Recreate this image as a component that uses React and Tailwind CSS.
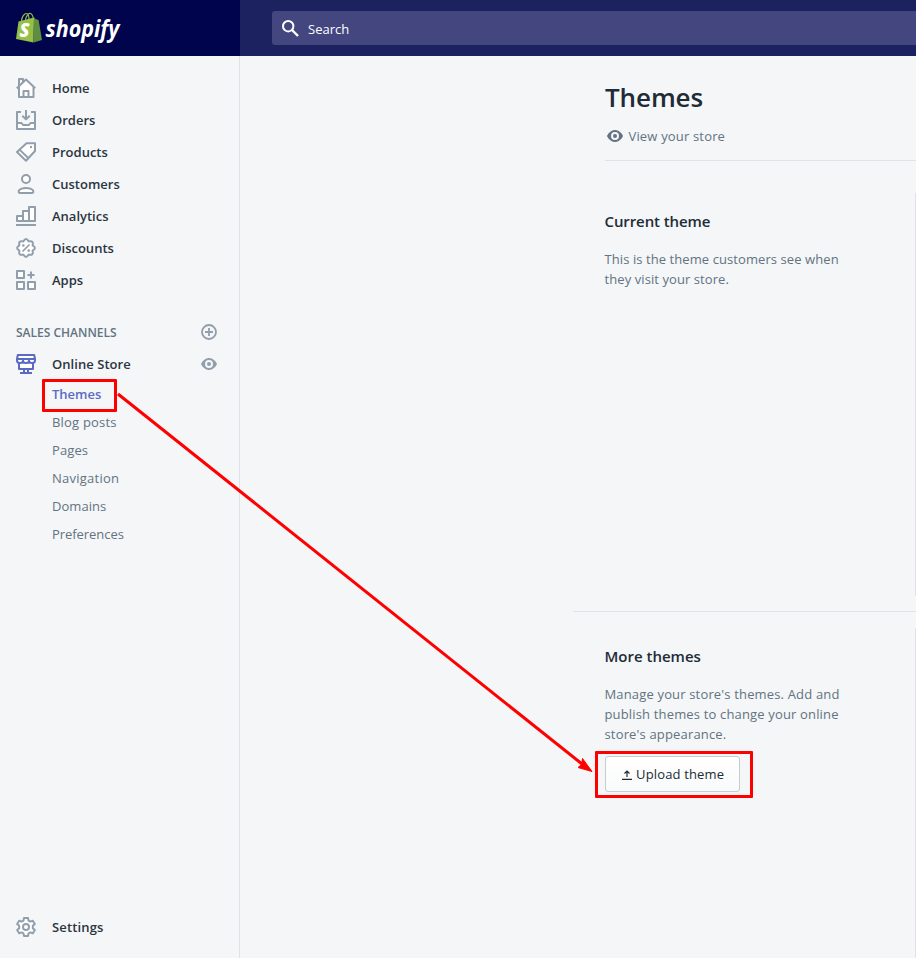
import React from 'react';

const Icon = ({ children, className = 'text-[#919eab]', size = 20 }) => (
  <svg
    width={size}
    height={size}
    viewBox="0 0 20 20"
    fill="none"
    stroke="currentColor"
    strokeWidth="2"
    strokeLinejoin="round"
    className={`block shrink-0 ${className}`}
  >
    {children}
  </svg>
);

const HomeIcon = () => (
  <Icon>
    <path fill="#fff" stroke="none" d="M3 9l7-7 7 7v10H3z" />
    <path d="M.8 10.2L10 1.6l9.2 8.600M3 9v10h14.500V9M7.500 19v-6h5v6M3 8V1h4v3" />
  </Icon>
);
const OrdersIcon = () => (
  <Icon>
    <path fill="#fff" stroke="none" d="M1 13h5l2 2h4l2-2h5v6H1z" />
    <path d="M5 2H1v17h18V2h-4M1 13h4.500l1.500 2h6l1.500-2H19M10 0v9M6.300 5.800L10 9.400l3.700-3.600" />
  </Icon>
);
const ProductsIcon = () => (
  <Icon>
    <path fill="#fff" d="M10.500 1.200H19V9L10 18.800 1 10z" />
    <path d="M3.500 7.600l9 8.600" />
    <rect x="14" y="4" width="2" height="2" fill="currentColor" stroke="none" />
  </Icon>
);
const CustomersIcon = () => (
  <Icon>
    <circle cx="10" cy="5" r="4" fill="#fff" />
    <path fill="#fff" d="M3.800 19h12.400c1.200 0 1.500-1.700.6-2.800C15.600 14.800 13 14 10 14s-5.600.800-6.800 2.200c-.900 1.100-.6 2.800.6 2.800z" />
  </Icon>
);
const AnalyticsIcon = () => (
  <Icon>
    <path fill="#fff" d="M1 15v-5h6v5zM7 15V5h6v10zM13 15V1h6v14z" />
    <path d="M0 19h20" />
  </Icon>
);
const DiscountsIcon = () => (
  <Icon>
    <path
      fill="#fff"
      d="M7.300 3.400Q10-1.200 12.700 3.400Q17.800 2.200 16.600 7.300Q21.200 10 16.600 12.700Q17.800 17.800 12.700 16.600Q10 21.200 7.300 16.600Q2.200 17.800 3.400 12.700Q-1.200 10 3.400 7.300Q2.200 2.200 7.300 3.400z"
    />
    <path strokeWidth="1.700" d="M6.500 13.500l7-7" />
    <circle cx="7.300" cy="7.500" r="1.300" fill="currentColor" stroke="none" />
    <circle cx="12.700" cy="12.600" r="1.300" fill="currentColor" stroke="none" />
  </Icon>
);
const AppsIcon = () => (
  <Icon>
    <path fill="#fff" d="M1 1h7v7H1zM1 12h7v7H1zM12 12h7v7h-7z" />
    <path d="M15 1.500v7M11.500 5h7" />
  </Icon>
);
const StoreIcon = () => (
  <Icon className="text-[#5c6ac4]">
    <path fill="#fff" d="M3 8h14v7H3z" />
    <path fill="#fff" stroke="none" d="M2 1h16l1 4v2l-3 2-3-2-3 2-3-2-3 2-3-2V5z" />
    <path d="M1 5l.800-4h16.400L19 5zM1 5v1.500C1 8 2.300 9 4 9s3-1 3-2.500C7 8 8.300 9 10 9s3-1 3-2.500C13 8 14.300 9 16 9s3-1 3-2.500V5" />
    <path d="M8 15v3.500M12 15v3.500M4 19h12" />
  </Icon>
);
const SettingsIcon = () => (
  <Icon>
    <path
      fill="#fff"
      d="M8 1h4l.500 2.600 1.800 1 2.500-.900 2 3.400-2 1.700v2.400l2 1.700-2 3.400-2.500-.900-1.800 1L12 19H8l-.500-2.600-1.800-1-2.500.900-2-3.400 2-1.700V8.800l-2-1.700 2-3.400 2.500.900 1.800-1z"
    />
    <circle cx="10" cy="10" r="3" />
  </Icon>
);
const EyeIcon = ({ className }) => (
  <svg width="16" height="12" viewBox="0 0 16 12" className={`block shrink-0 ${className}`}>
    <path fill="currentColor" d="M8 0C2.500 0 0 6 0 6s2.500 6 8 6 8-6 8-6-2.500-6-8-6z" />
    <circle cx="8" cy="6" r="3" fill="currentColor" stroke="#f4f6f8" strokeWidth="2" />
  </svg>
);

const NAV = [
  ['Home', HomeIcon],
  ['Orders', OrdersIcon],
  ['Products', ProductsIcon],
  ['Customers', CustomersIcon],
  ['Analytics', AnalyticsIcon],
  ['Discounts', DiscountsIcon],
  ['Apps', AppsIcon],
];
const PAGES = [
  ['Blog posts', 'tracking-[0.2px]'],
  ['Pages', 'tracking-[0.1px]'],
  ['Navigation', 'tracking-[0.25px]'],
  ['Domains', 'tracking-[0.05px]'],
  ['Preferences', 'tracking-[-0.05px]'],
];

const Logo = () => (
  <svg width="108" height="36" viewBox="0 0 108 36" className="block overflow-visible">
    <path d="M5.500 9C6 4 8.500 1.500 10.500 1.500S13 4 13 8M9.500 8C10 4 12.500 1 14.500 1.500S17 5 17.500 7" fill="none" stroke="#95bf47" strokeWidth="1.200" />
    <path fill="#95bf47" d="M2.500 9.500L18 5.500l-.5 25L0 27z" />
    <path fill="#5e8e3e" d="M18 5.500l2 1.800 2.600.600L26 28l-8.500 2.500z" />
    <text x="3.500" y="24.500" fill="#fff" fontFamily="Open Sans, sans-serif" fontWeight="800" fontStyle="italic" fontSize="20" textLength="10" lengthAdjust="spacingAndGlyphs">S</text>
    <text x="29.500" y="24.500" fill="#fff" fontFamily="Open Sans, sans-serif" fontWeight="700" fontStyle="italic" fontSize="23.500" textLength="74" lengthAdjust="spacingAndGlyphs">shopify</text>
  </svg>
);

export default function App() {
  return (
    <div className="relative flex h-[958px] w-[916px] flex-col overflow-hidden bg-[#f4f6f8] font-['Open_Sans',sans-serif] text-[13px] leading-5 text-[#637381]">
      <header className="flex h-14 shrink-0 bg-[#1c2260]">
        <div className="w-60 shrink-0 bg-[#00044c] pt-3 pl-4">
          <Logo />
        </div>
        <div className="mt-[11px] ml-8 flex h-[34px] flex-1 items-center rounded-l-[3px] bg-[#43467f] pl-2.5">
          <svg width="17" height="17" viewBox="0 0 17 17" fill="none" stroke="#fff" strokeWidth="2" className="block">
            <circle cx="6.200" cy="6.200" r="5.200" />
            <path d="M10 10l6 6" strokeWidth="2.400" />
          </svg>
          <span className="ml-[9px] pt-0.5 text-white">Search</span>
        </div>
      </header>

      <div className="flex min-h-0 flex-1">
        <aside className="flex w-60 shrink-0 flex-col border-r border-[#dfe3e8] pt-4 pb-[15px] pl-4">
          <nav className="font-semibold text-[#2b3540]">
            {NAV.map(([label, Glyph]) => (
              <a key={label} className="flex h-8 items-center gap-4">
                <Glyph />
                <span>{label}</span>
              </a>
            ))}
          </nav>
          <div className="mt-5 flex h-8 items-center justify-between pr-[22px]">
            <span className="pt-px text-[12px] font-semibold text-[#637381]">SALES CHANNELS</span>
            <svg width="16" height="16" viewBox="0 0 16 16" fill="none" stroke="#919eab" strokeWidth="1.800" className="block">
              <circle cx="8" cy="8" r="7" />
              <path d="M8 4v8M4 8h8" />
            </svg>
          </div>
          <div className="flex h-8 items-center pr-[22px] font-semibold text-[#2b3540]">
            <StoreIcon />
            <span className="ml-4 flex-1 tracking-[0.05px]">Online Store</span>
            <EyeIcon className="text-[#919eab]" />
          </div>
          <div className="flex flex-col pl-9">
            <a className="flex h-7 items-center font-semibold text-[#5c6ac4]">Themes</a>
            {PAGES.map(([label, tracking]) => (
              <a key={label} className={`flex h-7 items-center ${tracking}`}>{label}</a>
            ))}
          </div>
          <a className="mt-auto flex h-8 items-center gap-4 font-semibold tracking-[0.15px] text-[#2b3540]">
            <SettingsIcon />
            <span>Settings</span>
          </a>
        </aside>

        <main className="flex flex-1 flex-col pl-[333px]">
          <div className="ml-8 flex h-[105px] flex-col border-b border-[#dfe3e8] pt-[25px]">
            <h1 className="text-[26px] leading-8 font-semibold tracking-[-0.1px] text-[#212b36]">Themes</h1>
            <a className="mt-[13px] flex items-center pl-[2px]">
              <EyeIcon className="text-[#637381]" />
              <span className="ml-[5.500px] tracking-[0.17px]">View your store</span>
            </a>
          </div>
          <section className="flex h-[451px] justify-between border-b border-[#dfe3e8] pl-[31.500px]">
            <div className="pt-12">
              <h2 className="text-[15px] leading-6 font-semibold tracking-[-0.1px] text-[#212b36]">Current theme</h2>
              <p className="mt-4 tracking-[0.08px]">This is the theme customers see when<br />they visit your store.</p>
            </div>
            <div className="mt-8 h-[403px] w-px bg-[#dfe3e8]" />
          </section>
          <section className="flex flex-1 justify-between pl-[31.500px]">
            <div className="pt-8">
              <h2 className="text-[15px] leading-6 font-semibold text-[#212b36]">More themes</h2>
              <p className="mt-4 tracking-[0.16px]">Manage your store's themes. Add and<br />publish themes to change your online<br />store's appearance.</p>
              <button className="mt-3 ml-[0.500px] flex h-9 w-[135px] items-center rounded-[3px] border border-[#c4cdd5] bg-gradient-to-b from-white to-[#f9fafb] pl-4 text-[#212b36]">
                <svg width="10" height="10" viewBox="0 0 10 10" fill="none" stroke="currentColor" strokeWidth="1.200" className="mt-px block">
                  <path d="M5 7V1M2.500 3.500L5 1l2.500 2.500M0 9.400h10" />
                </svg>
                <span className="ml-1 tracking-[0.15px]">Upload theme</span>
              </button>
            </div>
            <div className="mt-4 w-px bg-[#dfe3e8]" />
          </section>
        </main>
      </div>

      <div className="absolute top-[379px] left-[42px] h-[33px] w-[75px] rounded-[1px] border-3 border-[#ff0000]" />
      <div className="absolute top-[751px] left-[595px] h-[47px] w-[158px] rounded-[1px] border-3 border-[#ff0000]" />
      <svg width="916" height="958" viewBox="0 0 916 958" className="pointer-events-none absolute inset-0">
        <path d="M118 394L582 764" stroke="#ff0000" strokeWidth="3" />
        <path d="M592 771.500L578 767.500l3.500-3 1-6z" fill="#ff0000" stroke="#ff0000" strokeWidth="1" />
      </svg>
    </div>
  );
}
